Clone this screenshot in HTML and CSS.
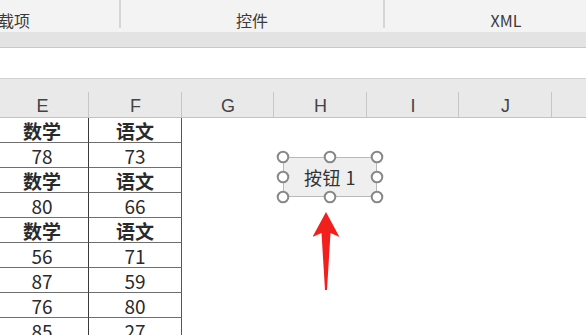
FILE: index.html
```html
<!DOCTYPE html>
<html lang="zh">
<head>
<meta charset="utf-8">
<link rel="stylesheet" href="styles.css">
</head>
<body>
<div class="app">
  <div class="ribbon">
    <div class="group g1"><span class="glabel">加载项</span></div>
    <div class="group g2"><span class="glabel">控件</span></div>
    <div class="group g3"><span class="glabel">XML</span></div>
  </div>
  <div class="band"></div>
  <div class="formula"></div>
  <div class="sheet">
    <div class="colhead">
      <div class="ch">E</div><div class="ch">F</div><div class="ch">G</div><div class="ch">H</div><div class="ch">I</div><div class="ch">J</div><div class="ch last"></div>
    </div>
    <div class="grid">
      <div class="row"><div class="cell b">数学</div><div class="cell b r">语文</div></div>
      <div class="row"><div class="cell">78</div><div class="cell r">73</div></div>
      <div class="row"><div class="cell b">数学</div><div class="cell b r">语文</div></div>
      <div class="row"><div class="cell">80</div><div class="cell r">66</div></div>
      <div class="row"><div class="cell b">数学</div><div class="cell b r">语文</div></div>
      <div class="row"><div class="cell">56</div><div class="cell r">71</div></div>
      <div class="row"><div class="cell">87</div><div class="cell r">59</div></div>
      <div class="row"><div class="cell">76</div><div class="cell r">80</div></div>
      <div class="row"><div class="cell">85</div><div class="cell r">27</div></div>
    </div>
    <div class="button-ctl">
      <div class="btn-face">按钮 1</div>
      <svg class="handles" width="110" height="56" viewBox="0 0 110 56">
        <g fill="#fff" stroke="#888" stroke-width="2">
          <circle cx="7" cy="7" r="5.3"/><circle cx="54" cy="7" r="5.3"/><circle cx="101" cy="7" r="5.3"/>
          <circle cx="7" cy="27" r="5.3"/><circle cx="101" cy="27" r="5.3"/>
          <circle cx="7" cy="47" r="5.3"/><circle cx="54" cy="47" r="5.3"/><circle cx="101" cy="47" r="5.3"/>
        </g>
      </svg>
    </div>
    <svg class="arrow" width="30" height="82" viewBox="0 0 30 82">
      <path d="M13 0 L26.5 25 L17.5 21 L14 78 L12 78 L8.5 21 L-0.5 25 Z" fill="#f2201c"/>
    </svg>
  </div>
</div>
</body>
</html>
```
FILE: styles.css
```css
* { box-sizing: border-box; }
html, body { margin: 0; padding: 0; }
body {
  width: 586px;
  height: 335px;
  overflow: hidden;
  background: #fff;
  font-family: "Noto Sans CJK SC", "Noto Sans", sans-serif;
  color: #222;
}
.app { width: 586px; height: 335px; overflow: hidden; }

.ribbon {
  height: 32px;
  background: #f3f3f3;
  display: flex;
  overflow: hidden;
}
.group {
  flex: none;
  height: 28px;
  display: flex;
  align-items: flex-end;
  justify-content: center;
  border-right: 2px solid #d6d6d6;
}
.g1 { width: 228px; margin-left: -107px; }
.g2 { width: 264px; }
.g3 { width: 242px; border-right: none; }
.glabel {
  font-size: 16px;
  line-height: 20px;
  color: #3a3a3a;
  margin-bottom: -2px;
}

.band {
  height: 16px;
  background: #e3e3e3;
  border-bottom: 1px solid #c8c8c8;
}
.formula {
  height: 31px;
  background: #fff;
  border-bottom: 1px solid #d2d2d2;
}

.sheet { position: relative; }
.colhead {
  height: 39px;
  background: #e9e9e9;
  border-bottom: 1px solid #c3c3c3;
  display: grid;
  grid-template-columns: 93px 93px 92px 93px 92px 93px 1fr;
  margin-left: -4px;
}
.ch {
  display: flex;
  align-items: flex-end;
  justify-content: center;
  font-family: "Liberation Sans", "Noto Sans", sans-serif;
  font-size: 18px;
  line-height: 18px;
  padding-bottom: 2px;
  color: #444;
  background: linear-gradient(#c6c6c6, #c6c6c6) right bottom / 1px 25px no-repeat;
}
.ch.last { background: none; }

.grid { margin-left: -4px; }
.row {
  display: grid;
  grid-template-columns: 93px 93px;
  height: 25px;
}
.cell {
  border-bottom: 1px solid #6e6e6e;
  border-right: 1px solid #3a3a3a;
  display: flex;
  align-items: center;
  justify-content: center;
  font-size: 19px;
  line-height: 22px;
  padding-top: 1px;
  color: #2a2a2a;
}
.cell.r { border-right: 1.5px solid #555; }
.cell.b { font-weight: 700; }

.button-ctl {
  position: absolute;
  left: 276px;
  top: 71px;
  width: 110px;
  height: 56px;
}
.btn-face {
  position: absolute;
  left: 7px;
  top: 7px;
  width: 94px;
  height: 40px;
  background: #efefef;
  border: 1px solid #b9b9b9;
  display: flex;
  align-items: center;
  justify-content: center;
  font-size: 18px;
  color: #333;
  letter-spacing: 0.5px;
}
.handles { position: absolute; left: 0; top: 0; }
.arrow {
  position: absolute;
  left: 313px;
  top: 133px;
}
```
